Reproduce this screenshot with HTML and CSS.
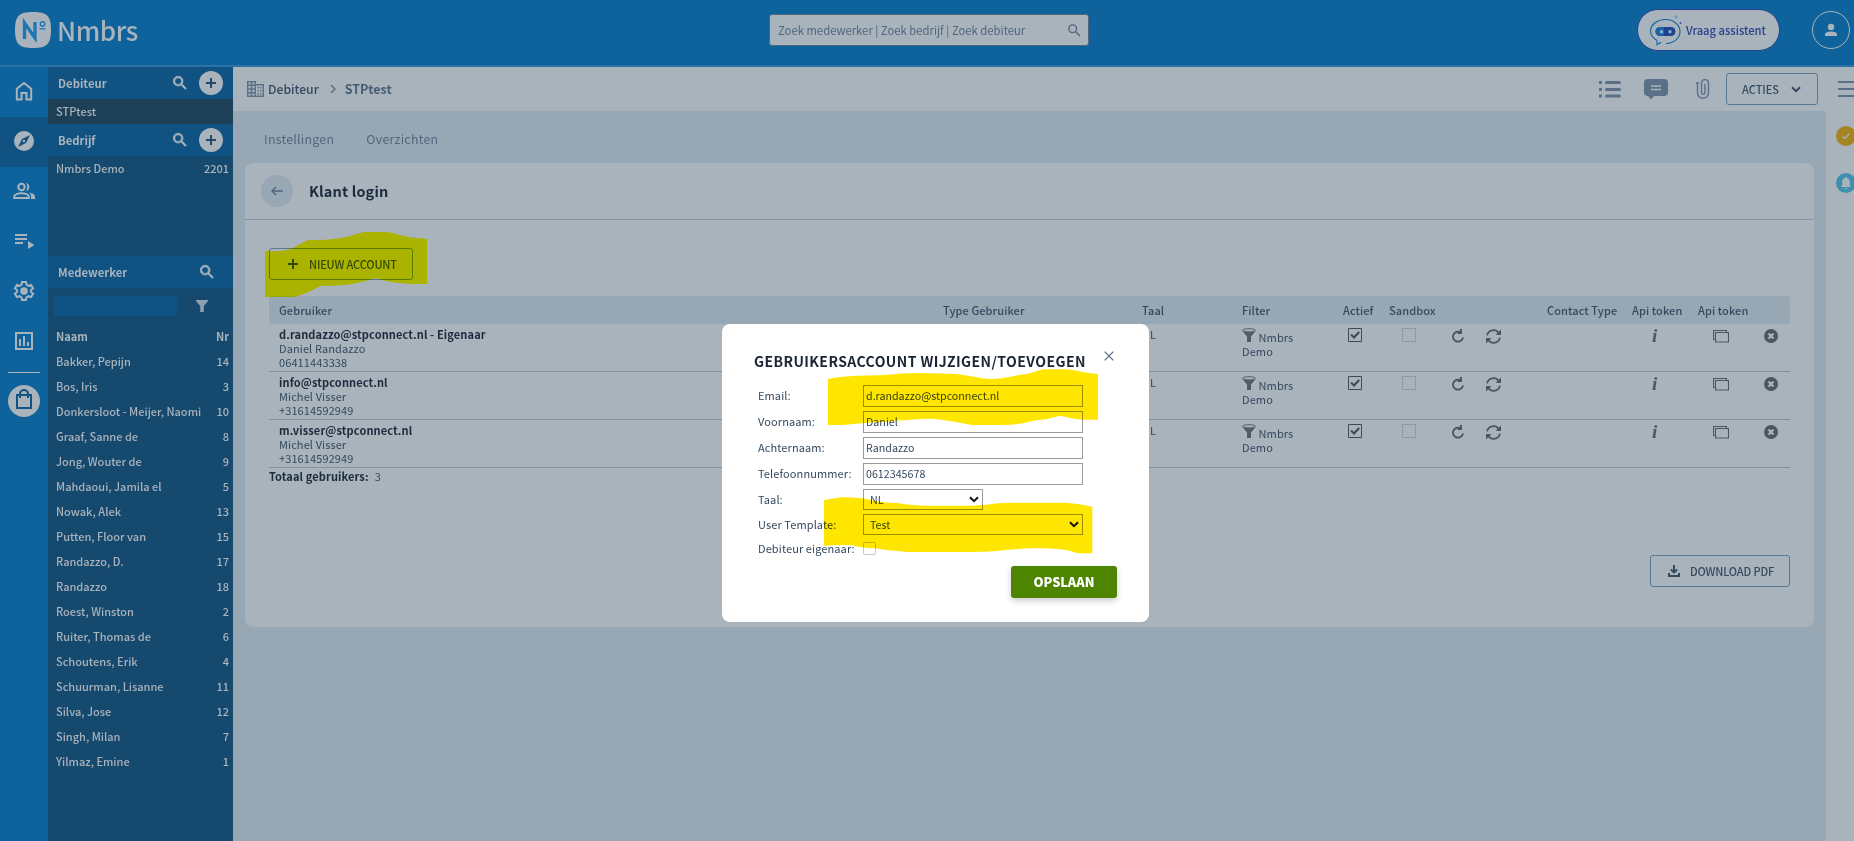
FILE: index.html
```html
<!DOCTYPE html>
<html lang="nl">
<head>
    <meta charset="UTF-8">
    <meta name="viewport" content="width=device-width, initial-scale=1.0">
    <title>Nmbrs - Klant login</title>
    <link rel="stylesheet" href="styles.css">
</head>
<body>

    <!-- Iconen -->
    <svg class="sprite">
        <symbol id="search" viewBox="0 0 24 24"><path d="M15.5 14h-.79l-.28-.27A6.47 6.47 0 0 0 16 9.5 6.5 6.5 0 1 0 9.500 16c1.610 0 3.090-.59 4.230-1.570l.27.28v.79l5 4.990L20.490 19l-4.990-5zm-6 0a4.500 4.500 0 1 1 0-9 4.500 4.500 0 0 1 0 9z"/></symbol>
        <symbol id="plus" viewBox="0 0 12 12"><path d="M6 1v10M1 6h10" fill="none" stroke="currentColor" stroke-width="2"/></symbol>
        <symbol id="funnel" viewBox="0 0 14 14"><ellipse cx="7" cy="2.300" rx="6.300" ry="1.600" fill="none" stroke="currentColor"/><path d="M0 2.500c2 2.200 12 2.200 14 0L9 8.500V14H5V8.500z"/></symbol>
        <symbol id="check" viewBox="0 0 14 14"><path d="M.5.5h13v13H.5z" fill="none" stroke="currentColor"/><path d="M3 6.500l3 3 5.200-5.500" fill="none" stroke="currentColor" stroke-width="2.200"/></symbol>
        <symbol id="redo" viewBox="0 0 14 14"><path d="M9.500 3.300A5 5 0 1 0 12 8.300" fill="none" stroke="currentColor" stroke-width="1.900"/><path d="M9 0v3H6.500v2H11V0z"/></symbol>
        <symbol id="sync" viewBox="0 0 14 14"><path d="M1 6a6 6 0 0 1 10.800-2.300M13 8a6 6 0 0 1-10.800 2.300" fill="none" stroke="currentColor" stroke-width="1.700"/><path d="M14 .5V5.500H9zM0 13.500v-5h5z"/></symbol>
        <symbol id="screens" viewBox="0 0 16 13"><path d="M2.500 9.500h-2v-9h13v2M2.500 2.500h13v9.500h-13z" fill="none" stroke="currentColor" stroke-width="1.100"/></symbol>
        <symbol id="remove" viewBox="0 0 14 14"><circle cx="7" cy="7" r="7"/><path class="cut" d="M4.500 4.500l5 5M9.500 4.500l-5 5" fill="none" stroke-width="2.200"/></symbol>
    </svg>

    <header class="header">
        <div class="logo">
            <svg width="36" height="36" viewBox="0 0 36 36"><path d="M18 0c14 0 18 4 18 18s-4 18-18 18S0 32 0 18 4 0 18 0z"/><path class="logo-n" d="M9.500 27V11L20 26V10" fill="none" stroke-width="3.300"/><circle class="logo-n" cx="27.500" cy="12" r="2.200" fill="none" stroke-width="1.500"/><path class="logo-n" d="M24.500 16.800h6" stroke-width="1.300"/></svg>
            <span>Nmbrs</span>
        </div>
        <div class="search">
            <span>Zoek medewerker | Zoek bedrijf | Zoek debiteur</span>
            <svg width="17" height="17"><use href="#search"/></svg>
        </div>
        <div class="assistant">
            <svg width="34" height="34" viewBox="0 0 34 34">
                <path d="M9 27.500C4 24.500 2.500 21 2.500 18 2.500 12 9 6.500 17.500 6.500S32 12 32 18.500 26 30.300 18 30.500M9 27.500v4.200l4-2.500" fill="none" stroke="#10639c" stroke-width="1.100"/>
                <rect x="7.500" y="14" width="20" height="9" rx="4.500" fill="#1f438f"/><path d="M12 14h4v9h-4a4.500 4.500 0 0 1 0-9z" fill="#1b63a5"/>
                <circle cx="13.500" cy="18.800" r="1.700" fill="#83b4d0"/><circle cx="22" cy="18.800" r="1.700" fill="#83b4d0"/>
                <path d="M28 2v4M26 4h4" stroke="#6494b5"/><circle cx="32.500" cy="10" r="1" fill="#4050a0"/>
            </svg>
            <span>Vraag assistent</span>
        </div>
        <div class="user">
            <svg width="14" height="14" viewBox="0 0 14 14"><circle cx="7" cy="4" r="3.200"/><path d="M1 13v-1.500C1 9.500 3 8.500 7 8.500s6 1 6 3V13z"/></svg>
        </div>
    </header>

    <div class="layout">
        <nav class="rail">
            <a><svg width="24" height="24" viewBox="0 0 24 24"><path d="M4.800 20.500V9.800L12 4l7.200 5.800v10.700h-4.700V14h-5v6.500z" fill="none" stroke="currentColor" stroke-width="2"/></svg></a>
            <a class="active"><svg width="24" height="24" viewBox="0 0 24 24"><circle cx="12" cy="12" r="10"/><path class="needle" d="M18 6l-4 8-8 4 4-8z"/><circle cx="12" cy="12" r="1.200"/></svg></a>
            <a><svg width="24" height="24" viewBox="0 0 24 24"><circle cx="9.500" cy="8" r="3.200" fill="none" stroke="currentColor" stroke-width="2"/><path d="M2.200 19v-1.500c0-2 4-3.200 7.300-3.200s7.300 1.200 7.300 3.200V19z" fill="none" stroke="currentColor" stroke-width="2"/><path d="M14 3.900a4.200 4.200 0 0 1 0 8.200c1.800-2.600 1.800-5.600 0-8.200zM17 13.400c3.500.7 6 2 6 4.300V20h-4v-2.300c0-1.700-.7-3-2-4.300z"/></svg></a>
            <a><svg width="24" height="24" viewBox="0 0 24 24"><path d="M3 5h12v2H3zM3 9h12v2H3zM3 13h8v2H3zM16 12l6.500 4-6.500 4z"/></svg></a>
            <a><svg width="24" height="24" viewBox="0 0 24 24"><path d="M10 3h4l.5 2.700 2 1.100 2.600-.9 2 3.400-2.100 1.800v1.800l2.100 1.800-2 3.400-2.600-.9-2 1.100L14 21h-4l-.5-2.700-2-1.100-2.600.9-2-3.400L5 12.900v-1.800L2.900 9.300l2-3.400 2.600.9 2-1.100z" fill="none" stroke="currentColor" stroke-width="2"/><circle cx="12" cy="12" r="3.800"/></svg></a>
            <a><svg width="24" height="24" viewBox="0 0 24 24"><path d="M4 4h16v16H4z" fill="none" stroke="currentColor" stroke-width="2"/><path d="M7 10h2v7H7zM11 7h2v10h-2zM15 13h2v4h-2z"/></svg></a>
            <hr>
            <div class="shop"><svg width="20" height="22" viewBox="0 0 20 22"><path d="M3 6h14v13H3zM6 9V5a4 4 0 0 1 8 0v4" fill="none" stroke="currentColor" stroke-width="2"/></svg></div>
        </nav>

        <aside class="sidebar">
            <div class="side-head">
                <b>Debiteur</b>
                <svg width="18" height="18"><use href="#search"/></svg>
                <i class="add"><svg width="12" height="12"><use href="#plus"/></svg></i>
            </div>
            <div class="side-row selected"><span>STPtest</span></div>
            <div class="side-head">
                <b>Bedrijf</b>
                <svg width="18" height="18"><use href="#search"/></svg>
                <i class="add"><svg width="12" height="12"><use href="#plus"/></svg></i>
            </div>
            <div class="companies">
                <div class="side-row"><span>Nmbrs Demo</span><span>2201</span></div>
            </div>
            <div class="side-head employees">
                <b>Medewerker</b>
                <svg width="18" height="18"><use href="#search"/></svg>
            </div>
            <div class="side-filter">
                <div class="filter-input"></div>
                <svg width="12" height="12" viewBox="0 0 12 12"><path d="M0 0h12v1L7.800 6v6H4.200V6L0 1z"/></svg>
            </div>
            <div class="side-row title"><span>Naam</span><span>Nr</span></div>
            <div class="side-row"><span>Bakker, Pepijn</span><span>14</span></div>
            <div class="side-row"><span>Bos, Iris</span><span>3</span></div>
            <div class="side-row"><span>Donkersloot - Meijer, Naomi</span><span>10</span></div>
            <div class="side-row"><span>Graaf, Sanne de</span><span>8</span></div>
            <div class="side-row"><span>Jong, Wouter de</span><span>9</span></div>
            <div class="side-row"><span>Mahdaoui, Jamila el</span><span>5</span></div>
            <div class="side-row"><span>Nowak, Alek</span><span>13</span></div>
            <div class="side-row"><span>Putten, Floor van</span><span>15</span></div>
            <div class="side-row"><span>Randazzo, D.</span><span>17</span></div>
            <div class="side-row"><span>Randazzo</span><span>18</span></div>
            <div class="side-row"><span>Roest, Winston</span><span>2</span></div>
            <div class="side-row"><span>Ruiter, Thomas de</span><span>6</span></div>
            <div class="side-row"><span>Schoutens, Erik</span><span>4</span></div>
            <div class="side-row"><span>Schuurman, Lisanne</span><span>11</span></div>
            <div class="side-row"><span>Silva, Jose</span><span>12</span></div>
            <div class="side-row"><span>Singh, Milan</span><span>7</span></div>
            <div class="side-row"><span>Yilmaz, Emine</span><span>1</span></div>
        </aside>

        <div class="content">
            <div class="topbar">
                <svg class="building" width="17" height="16" viewBox="0 0 17 16"><path d="M.7.7h7.600v14.600H.7zM8.300 3.700h8v11.600h-8M.7 4.300h7.600M.7 8h7.600M.7 11.700h7.600M4.500.7v14.600" fill="none" stroke="currentColor" stroke-width="1.400"/><path d="M10.500 6h1.500v1.500h-1.500zM13 6h1.500v1.500H13zM10.500 9h1.500v1.500h-1.500zM13 9h1.500v1.500H13zM10.500 12h1.500v1.500h-1.500zM13 12h1.500v1.500H13z"/></svg>
                <span class="crumb">Debiteur</span>
                <svg class="chevron" width="6" height="10" viewBox="0 0 6 10"><path d="M1 1l4 4-4 4" fill="none" stroke="currentColor" stroke-width="1.500"/></svg>
                <b class="crumb last">STPtest</b>
                <div class="tools">
                    <svg class="list" width="22" height="17" viewBox="0 0 22 17"><path d="M0 0h3v3H0zM0 7h3v3H0zM0 13.500h3v3H0z"/><path d="M7.500 1.500h13M7.500 8.500h13M7.500 15h13" stroke="currentColor" stroke-width="3" stroke-linecap="round"/></svg>
                    <svg class="chat" width="24" height="21" viewBox="0 0 24 21"><path d="M4 0h16a4 4 0 0 1 4 4v9a4 4 0 0 1-4 4H10l-3 3.500L4 17a4 4 0 0 1-4-4V4a4 4 0 0 1 4-4z"/><path class="lines" d="M7 7h10M7 10.500h10"/></svg>
                    <svg class="clip" width="14" height="20" viewBox="0 0 14 20"><path d="M1.500 3.500v10.300a5.500 5.500 0 0 0 11 0V4a3.500 3.500 0 0 0-7 0v9.500a1.700 1.700 0 0 0 3.400 0V5M0 4h3" fill="none" stroke="currentColor" stroke-width="1.400"/></svg>
                    <div class="btn acties">ACTIES<svg width="10" height="7" viewBox="0 0 10 7"><path d="M1 1.200l4 4 4-4" fill="none" stroke="currentColor" stroke-width="2"/></svg></div>
                    <div class="burger"><i></i><i></i><i></i></div>
                </div>
            </div>

            <div class="body">
                <main class="main">
                    <div class="tabs"><span>Instellingen</span><span>Overzichten</span></div>
                    <section class="card">
                        <div class="card-head">
                            <i class="back"><svg width="12" height="10" viewBox="0 0 12 10"><path d="M12 5H1M5 1L1 5l4 4" fill="none" stroke="currentColor" stroke-width="1.500"/></svg></i>
                            <h1>Klant login</h1>
                        </div>
                        <div class="card-body">
                            <div class="btn new"><svg width="12" height="12"><use href="#plus"/></svg>NIEUW ACCOUNT
                                <svg class="marker" width="162" height="66" viewBox="105 36 486 198"><path d="M105 93h45Q175 91 195 80T235 60L290 59Q345 54 370 45T405 36h60Q490 38 510 45T591 57V192h-50Q470 187 436 174 390 190 350 194T272 198L240 214Q210 228 190 231H105z"/></svg>
                            </div>

                            <div class="grid grid-head">
                                <span>Gebruiker</span><span>Type Gebruiker</span><span>Taal</span><span>Filter</span><span>Actief</span><span>Sandbox</span><span></span><span></span><span class="contact">Contact Type</span><span>Api token</span><span>Api token</span><span></span>
                            </div>
                            <div class="grid">
                                <div><b>d.randazzo@stpconnect.nl - Eigenaar</b><br>Daniel Randazzo<br>06411443338</div><div></div><div>NL</div>
                                <div class="filter"><svg width="14" height="14"><use href="#funnel"/></svg> Nmbrs<br>Demo</div>
                                <div class="box"><svg width="14" height="14"><use href="#check"/></svg></div>
                                <div class="sandbox"><i></i></div>
                                <div class="redo"><svg width="14" height="14"><use href="#redo"/></svg></div>
                                <div class="sync"><svg width="15" height="15"><use href="#sync"/></svg></div><div></div>
                                <div class="info">i</div>
                                <div class="screens"><svg width="16" height="13"><use href="#screens"/></svg></div>
                                <div class="remove"><svg width="14" height="14"><use href="#remove"/></svg></div>
                            </div>
                            <div class="grid">
                                <div><b>info@stpconnect.nl</b><br>Michel Visser<br>+31614592949</div><div></div><div>NL</div>
                                <div class="filter"><svg width="14" height="14"><use href="#funnel"/></svg> Nmbrs<br>Demo</div>
                                <div class="box"><svg width="14" height="14"><use href="#check"/></svg></div>
                                <div class="sandbox"><i></i></div>
                                <div class="redo"><svg width="14" height="14"><use href="#redo"/></svg></div>
                                <div class="sync"><svg width="15" height="15"><use href="#sync"/></svg></div><div></div>
                                <div class="info">i</div>
                                <div class="screens"><svg width="16" height="13"><use href="#screens"/></svg></div>
                                <div class="remove"><svg width="14" height="14"><use href="#remove"/></svg></div>
                            </div>
                            <div class="grid">
                                <div><b>m.visser@stpconnect.nl</b><br>Michel Visser<br>+31614592949</div><div></div><div>NL</div>
                                <div class="filter"><svg width="14" height="14"><use href="#funnel"/></svg> Nmbrs<br>Demo</div>
                                <div class="box"><svg width="14" height="14"><use href="#check"/></svg></div>
                                <div class="sandbox"><i></i></div>
                                <div class="redo"><svg width="14" height="14"><use href="#redo"/></svg></div>
                                <div class="sync"><svg width="15" height="15"><use href="#sync"/></svg></div><div></div>
                                <div class="info">i</div>
                                <div class="screens"><svg width="16" height="13"><use href="#screens"/></svg></div>
                                <div class="remove"><svg width="14" height="14"><use href="#remove"/></svg></div>
                            </div>
                            <div class="total"><b>Totaal gebruikers:</b><span>3</span></div>
                            <div class="btn download"><svg width="12" height="12" viewBox="0 0 12 12"><path d="M6 0v7M2.800 4.500L6 7.500l3.200-3M1 8v3h10V8" fill="none" stroke="currentColor" stroke-width="2"/></svg>DOWNLOAD PDF</div>
                        </div>
                    </section>
                </main>
                <div class="right-rail">
                    <i class="dot task"><svg width="10" height="8" viewBox="0 0 10 8"><path d="M1.500 4.500l2.300 2L8.500 1.500" fill="none" stroke="currentColor" stroke-width="1.200"/></svg></i>
                    <i class="dot bell"><svg width="10" height="13" viewBox="0 0 10 13"><path d="M5 0c.8 0 1 .5 1 1 2 .6 2.800 2 2.800 4v3l1 2H.2l1-2V5C1.200 3 2 1.600 4 1c0-.5.2-1 1-1zM3.500 11h3L5 12.500z"/></svg></i>
                </div>
            </div>
        </div>
    </div>

    <!-- Popup account wijzigen -->
    <div class="modal">
        <div class="modal-head">
            <h2>GEBRUIKERSACCOUNT WIJZIGEN/TOEVOEGEN</h2>
            <svg width="10" height="10" viewBox="0 0 10 10"><path d="M.7.7l8.600 8.600M9.300.7L.7 9.300" fill="none" stroke="currentColor" stroke-width="1.200"/></svg>
        </div>
        <div class="form">
            <label>Email:</label><div class="field">d.randazzo@stpconnect.nl</div>
            <label>Voornaam:</label><div class="field">Daniel</div>
            <label>Achternaam:</label><div class="field">Randazzo</div>
            <label>Telefoonnummer:</label><div class="field">0612345678</div>
            <label>Taal:</label><div class="field select small">NL<svg width="10" height="7" viewBox="0 0 10 7"><path d="M1 1.200l4 4 4-4" fill="none" stroke="currentColor" stroke-width="2"/></svg></div>
            <label>User Template:</label><div class="field select">Test<svg width="10" height="7" viewBox="0 0 10 7"><path d="M1 1.200l4 4 4-4" fill="none" stroke="currentColor" stroke-width="2"/></svg></div>
            <label class="owner">Debiteur eigenaar:</label><div class="tick"></div>
        </div>
        <div class="save">OPSLAAN</div>
        <svg class="marker mark-email" width="270" height="57" viewBox="384 177 810 171"><path d="M384 207Q425 198 470 197 540 197 590 192T750 191Q800 194 830 202T905 205Q950 195 980 192 1010 184 1030 178h65Q1130 181 1150 187L1194 192V329h-50Q1110 325 1080 317 1040 330 1000 332 960 344 910 345H815Q770 336 730 330T650 328Q590 332 560 335 490 338 430 345H384z"/></svg>
        <svg class="marker mark-template" width="269" height="57" viewBox="370 562 807 171"><path d="M370 571Q410 564 430 563 480 563 510 571T590 580Q640 588 680 588H810Q860 586 890 581 910 579 930 579h160Q1130 580 1175 591V731h-46Q1110 722 1080 719 1040 714 1000 716 930 718 890 724 850 727 810 727H620Q560 722 520 716 480 715 450 706 410 705 370 708z"/></svg>
    </div>

</body>
</html>
```
FILE: styles.css
```css
* {
    box-sizing: border-box;
}
body {
    margin: 0;
    height: 841px;
    overflow: hidden;
    font-family: "Noto Sans CJK SC", "Noto Sans", sans-serif;
    font-size: 11px;
    line-height: 14px;
    color: #34495e;
    background: #98a7b4;
}
svg {
    display: block;
    flex: none;
    fill: currentColor;
}
.sprite {
    display: none;
}
i {
    font-style: normal;
}

/* Header */
.header {
    height: 67px;
    display: flex;
    align-items: flex-start;
    background: #0e639c;
    border-bottom: 2px solid #2d72a6;
    padding-right: 4px;
}
.logo {
    width: 754px;
    margin: 12px 0 0 15px;
    display: flex;
    gap: 6px;
    color: #a9b3bc;
    font-size: 26px;
    font-weight: 500;
    line-height: 36px;
    letter-spacing: -0.4px;
}
.logo-n {
    stroke: #1f76b5;
}
.search {
    width: 320px;
    height: 32px;
    margin-top: 14px;
    padding: 0 5px 0 8px;
    display: flex;
    align-items: center;
    justify-content: space-between;
    background: #a9b3bc;
    border: 1px solid #50677d;
    border-radius: 3px;
    color: #50677d;
    font-size: 11.3px;
}
.assistant {
    width: 143px;
    height: 42px;
    margin: 9px 32px 0 auto;
    padding-left: 10px;
    display: flex;
    align-items: center;
    gap: 4px;
    background: #a9b3bc;
    border: 1px solid #27408f;
    border-radius: 21px;
    color: #27408f;
    font-size: 11.2px;
    font-weight: 500;
}
.user {
    width: 38px;
    height: 38px;
    margin-top: 11px;
    border: 1px solid #a9b3bc;
    border-radius: 50%;
    display: flex;
    align-items: center;
    justify-content: center;
    color: #a9b3bc;
}

.layout {
    display: flex;
    height: 774px;
}

/* Linker balk */
.rail {
    width: 48px;
    background: #0e639c;
    color: #a9b3bc;
}
.rail a {
    height: 50px;
    padding-bottom: 2px;
    display: flex;
    align-items: center;
    justify-content: center;
}
.rail .active {
    background: #105383;
}
.needle {
    fill: #105383;
}
.rail hr {
    width: 32px;
    margin: 5px auto 12px;
    border: 0;
    border-top: 1px solid #a9b3bc;
}
.shop {
    width: 32px;
    height: 32px;
    margin: auto;
    padding-bottom: 2px;
    border-radius: 50%;
    background: #a9b3bc;
    color: #105383;
    display: flex;
    align-items: center;
    justify-content: center;
}

/* Zijbalk */
.sidebar {
    width: 185px;
    background: #16496e;
    color: #a9b3bc;
    font-weight: 500;
}
.side-head {
    height: 32px;
    padding: 0 10px;
    display: flex;
    align-items: center;
    background: #105383;
    font-size: 11.3px;
}
.side-head b {
    margin-right: auto;
    padding-bottom: 1px;
}
.side-head svg {
    stroke: currentColor;
}
.employees {
    padding-right: 17px;
}
.add {
    width: 24px;
    height: 24px;
    margin-left: 10px;
    border-radius: 50%;
    background: #a9b3bc;
    color: #20486b;
    display: flex;
    align-items: center;
    justify-content: center;
}
.side-row {
    height: 25px;
    padding: 0 4px 2px 8px;
    display: flex;
    align-items: center;
    justify-content: space-between;
}
.selected {
    background: #1d4057;
}
.title {
    font-weight: bold;
}
.companies {
    height: 100px;
}
.side-filter {
    height: 36px;
    padding: 8px 0 0 6px;
    display: flex;
    gap: 19px;
    color: #8d9fb0;
}
.side-filter svg {
    margin-top: 4px;
}
.filter-input {
    width: 123px;
    height: 20px;
    background: #105383;
}

/* Inhoud */
.content {
    flex: 1;
    min-width: 0;
}
.topbar {
    height: 44px;
    display: flex;
    align-items: center;
    padding-left: 14px;
    background: #a9b3bc;
    color: #5a7088;
    overflow: hidden;
}
.crumb {
    margin-left: 4px;
    font-size: 12.2px;
    font-weight: 500;
    color: #34495e;
}
.chevron {
    margin: 0 5px 0 11px;
}
.last {
    font-size: 12.5px;
    font-weight: bold;
    color: #465c73;
}
.tools {
    margin-left: auto;
    display: flex;
    align-items: center;
}
.chat {
    margin: 0 28px 0 23px;
}
.lines {
    stroke: #a9b3bc;
    stroke-width: 1.3;
}
.clip {
    margin-right: 16px;
}
.btn {
    height: 32px;
    border: 1px solid #5a7990;
    border-radius: 3px;
    display: flex;
    align-items: center;
    font-weight: 500;
    letter-spacing: -0.15px;
    color: #34495e;
    white-space: nowrap;
}
.acties {
    width: 92px;
    padding-left: 15px;
    gap: 12px;
    letter-spacing: 0;
}
.burger {
    width: 16px;
    margin-left: 20px;
}
.burger i {
    display: block;
    height: 2px;
    margin: 5px 0;
    background: #5a7088;
}
.body {
    height: 730px;
    display: flex;
}
.main {
    flex: 1;
    padding: 0 12px;
}
.right-rail {
    width: 28px;
    padding: 15px 0 0 10px;
    background: #a9b3bc;
}
.dot {
    width: 20px;
    height: 20px;
    margin-bottom: 27px;
    border-radius: 50%;
    display: flex;
    align-items: center;
    justify-content: center;
    color: #a9b3bc;
}
.task {
    background: #a58423;
}
.bell {
    background: #3f8fae;
}
.tabs {
    height: 52px;
    padding: 4px 0 0 19px;
    display: flex;
    align-items: center;
    gap: 32px;
    font-size: 12.4px;
    letter-spacing: 0.25px;
    color: #50677d;
}
.card {
    height: 464px;
    border-radius: 8px;
    background: #a9b3bc;
}
.card-head {
    height: 57px;
    padding-left: 16px;
    display: flex;
    align-items: center;
    gap: 16px;
    border-bottom: 1px solid #8493a2;
}
.back {
    width: 32px;
    height: 32px;
    border-radius: 50%;
    background: #98a7b4;
    display: flex;
    align-items: center;
    justify-content: center;
    color: #50677d;
}
h1 {
    margin: 0;
    font-size: 14.5px;
    letter-spacing: 0.15px;
    color: #1c2b3c;
}
.card-body {
    padding: 28px 24px 0;
}
.new {
    width: 144px;
    padding-left: 17px;
    gap: 10px;
    margin-bottom: 16px;
    position: relative;
}
.marker {
    position: absolute;
    mix-blend-mode: multiply;
    color: #ffe600;
}
.new .marker {
    left: -5px;
    top: -17px;
    color: #ffff00;
}
.grid {
    height: 48px;
    padding: 3px 0 1px 10px;
    display: grid;
    grid-template-columns: 664px 199px 100px 101px 46px 54px 30px 42px 117px 66px 66px 26px;
    border-bottom: 1px solid #8491a0;
    letter-spacing: 0.1px;
}
.grid b, .total b {
    color: #1c2b3c;
    letter-spacing: 0.13px;
}
.grid-head {
    height: 28px;
    padding: 0 0 1px 10px;
    align-items: center;
    border: 0;
    border-radius: 4px;
    background: #98a7b4;
    font-weight: 500;
}
.contact {
    padding-left: 32px;
}
.filter {
    padding-top: 3px;
}
.filter svg {
    display: inline-block;
    vertical-align: top;
    margin-top: -2px;
    color: #505b65;
}
.box {
    padding: 1px 0 0 5px;
    color: #414c58;
}
.sandbox i {
    display: block;
    width: 14px;
    height: 14px;
    margin: 1px 0 0 13px;
    border: 1px solid #8e99a3;
}
.redo, .sync, .screens, .remove, .info {
    color: #4b5660;
}
.redo {
    padding: 2px 0 0 8px;
}
.sync {
    padding: 2px 0 0 13px;
}
.info {
    padding: 2px 0 0 20px;
    font: italic bold 19px/14px "Liberation Serif", serif;
}
.screens {
    padding: 3px 0 0 15px;
}
.remove {
    padding-top: 2px;
}
.cut {
    stroke: #a9b3bc;
}
.total {
    padding-top: 1px;
    display: flex;
    gap: 6px;
}
.download {
    width: 140px;
    margin: 72px 0 0 auto;
    padding-left: 17px;
    gap: 10px;
}

/* Popup */
.modal {
    position: absolute;
    left: 722px;
    top: 324px;
    width: 427px;
    height: 298px;
    padding: 27px 32px 0;
    border-radius: 8px;
    background: #fff;
    isolation: isolate;
}
.modal-head {
    display: flex;
    justify-content: space-between;
    padding-right: 3px;
    color: #50677d;
}
h2 {
    margin: 0;
    font-size: 14px;
    line-height: 20px;
    letter-spacing: 0.42px;
    white-space: nowrap;
    color: #1a2433;
}
.form {
    margin: 14px 0 0 4px;
    display: grid;
    grid-template-columns: 105px 220px;
    row-gap: 4px;
    align-items: center;
}
.form label {
    padding-bottom: 2px;
    letter-spacing: 0.1px;
}
.field {
    height: 22px;
    padding: 0 0 1px 2px;
    display: flex;
    align-items: center;
    border: 1px solid #9b9b9b;
    background: #fff;
    font-size: 10.7px;
}
.select {
    height: 21px;
    padding: 0 3px 0 6px;
    justify-content: space-between;
}
.select svg {
    color: #111;
}
.small {
    width: 120px;
}
.form .owner {
    padding: 2px 0 0;
}
.tick {
    width: 13px;
    height: 13px;
    margin-top: 2px;
    border: 1px solid #c8c8c8;
    border-radius: 2px;
}
.save {
    width: 106px;
    height: 32px;
    margin: 11px 0 0 257px;
    border-radius: 3px;
    background: #4d8500;
    box-shadow: 0 3px 6px rgba(0, 0, 0, 0.2);
    color: #fff;
    font-size: 12.8px;
    font-weight: 900;
    line-height: 32px;
    text-align: center;
}
.mark-email {
    left: 106px;
    top: 45px;
}
.mark-template {
    left: 102px;
    top: 173px;
}
```
